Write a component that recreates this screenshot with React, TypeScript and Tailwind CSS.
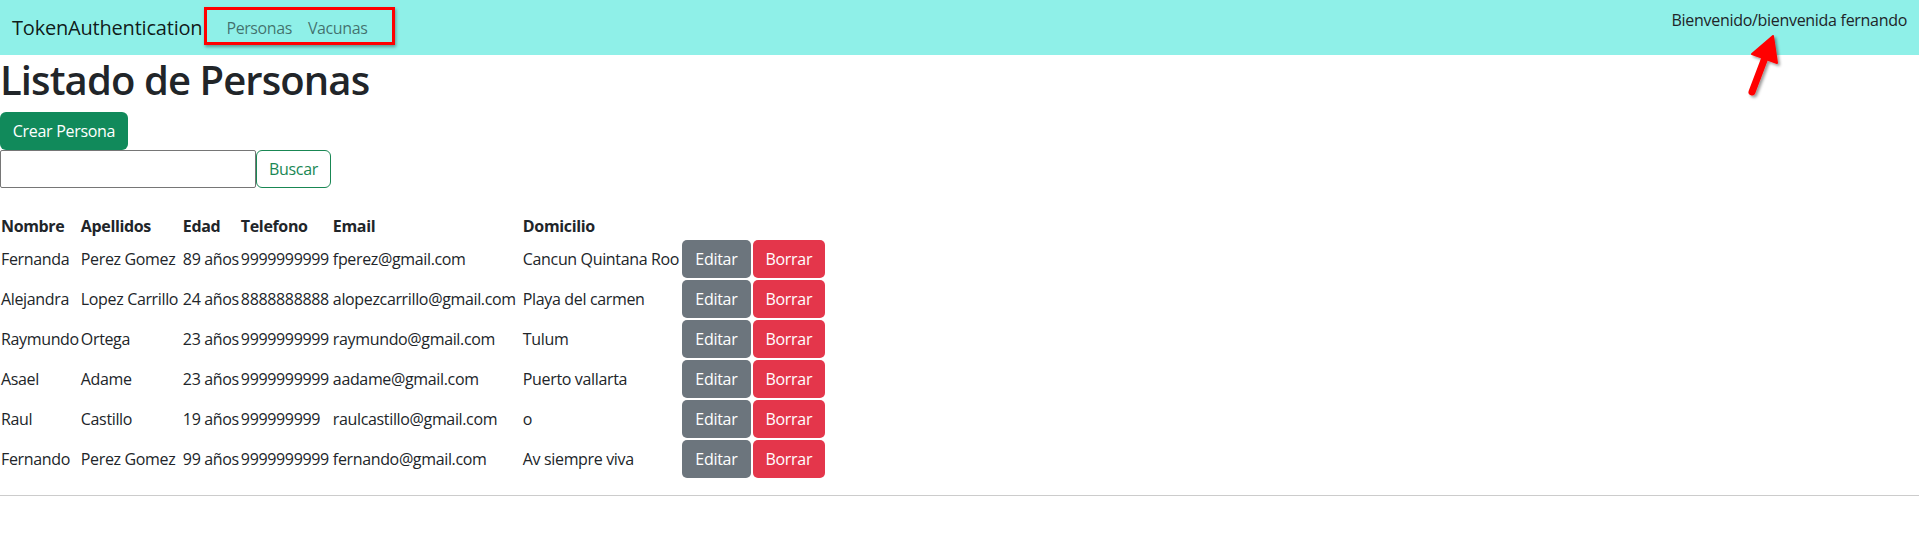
import React from "react";

const rows = [
  ["Fernanda", "Perez Gomez", "89 años", "9999999999", "fperez@gmail.com", "Cancun Quintana Roo"],
  ["Alejandra", "Lopez Carrillo", "24 años", "8888888888", "alopezcarrillo@gmail.com", "Playa del carmen"],
  ["Raymundo", "Ortega", "23 años", "9999999999", "raymundo@gmail.com", "Tulum"],
  ["Asael", "Adame", "23 años", "9999999999", "aadame@gmail.com", "Puerto vallarta"],
  ["Raul", "Castillo", "19 años", "999999999", "raulcastillo@gmail.com", "o"],
  ["Fernando", "Perez Gomez", "99 años", "9999999999", "fernando@gmail.com", "Av siempre viva"],
];

const widths = [79, 102, 58, 92, 190, 159, 71, 74];

export default function App() {
  return (
    <div className="relative w-[1919px] h-[549px] bg-white text-[#212529] font-['Open_Sans','Noto_Sans',sans-serif] text-[16px] overflow-hidden">
      <nav className="h-[55px] bg-[#8ff0e8] flex justify-between px-[12px]">
        <div className="flex items-center">
          <span className="text-[20px] tracking-[-0.2px] text-black/90 mr-[16px] pt-[1px]">TokenAuthentication</span>
          <a className="px-[8px] text-black/55 pt-[1px] tracking-[-0.4px]">Personas</a>
          <a className="px-[8px] text-black/55 pt-[1px] tracking-[-0.4px]">Vacunas</a>
        </div>
        <div className="pt-[8px] text-[16px] text-[#212529] tracking-[-0.3px]">Bienvenido/bienvenida fernando</div>
      </nav>

      <main className="pt-[1px]">
        <h1 className="text-[40px] font-semibold leading-[1.2] mb-[8px] tracking-[-0.9px]">Listado de Personas</h1>
        <button className="h-[38px] w-[128px] rounded-[6px] bg-[#118a5b] text-white text-[16px] tracking-[-0.3px]">
          Crear Persona
        </button>
        <div className="flex">
          <input className="h-[38px] w-[256px] border border-[#767676] rounded-[2px] bg-white outline-none px-2" />
          <button className="h-[38px] w-[75px] rounded-[6px] border border-[#198754] text-[#198754] bg-white text-[16px] tracking-[-0.3px]">
            Buscar
          </button>
        </div>

        <table className="mt-[25px] table-fixed border-collapse tracking-[-0.35px]">
          <colgroup>
            {widths.map((w, i) => (
              <col key={i} style={{ width: w }} />
            ))}
          </colgroup>
          <thead>
            <tr className="h-[26px]">
              {["Nombre", "Apellidos", "Edad", "Telefono", "Email", "Domicilio", "", ""].map((h, i) => (
                <th key={i} className="p-[1px] text-left font-bold whitespace-nowrap leading-[24px]">
                  {h}
                </th>
              ))}
            </tr>
          </thead>
          <tbody>
            {rows.map((r, i) => (
              <tr key={i} className="h-[40px]">
                {r.map((c, j) => (
                  <td key={j} className="p-[1px] align-middle whitespace-nowrap">
                    {c}
                  </td>
                ))}
                <td className="p-[1px] align-middle">
                  <button className="h-[38px] w-[69px] rounded-[5px] bg-[#6c757d] text-white tracking-[-0.3px]">Editar</button>
                </td>
                <td className="p-[1px] align-middle">
                  <button className="h-[38px] w-[72px] rounded-[5px] bg-[#e4364b] text-white tracking-[-0.3px]">Borrar</button>
                </td>
              </tr>
            ))}
          </tbody>
        </table>
        <hr className="mt-[16px] border-t border-[#cccccc]" />
      </main>

      {/* annotation: red box */}
      <div className="absolute left-[204px] top-[7px] w-[191px] h-[38px] border-[3px] border-[#ff0000] shadow-[1px_2px_3px_rgba(0,0,0,0.35)]" />

      {/* annotation: red arrow */}
      <svg className="absolute left-[1735px] top-[25px]" width="60" height="80" viewBox="1735 25 60 80">
        <defs>
          <filter id="sh" x="-50%" y="-50%" width="200%" height="200%">
            <feDropShadow dx="2" dy="2" stdDeviation="1.5" floodColor="#000" floodOpacity="0.4" />
          </filter>
        </defs>
        <g filter="url(#sh)">
          <line x1="1752" y1="92" x2="1766" y2="55" stroke="#ff0000" strokeWidth="7" strokeLinecap="round" />
          <polygon points="1773,36 1752,54 1777,63" fill="#ff0000" stroke="#ff0000" strokeWidth="2" strokeLinejoin="round" />
        </g>
      </svg>
    </div>
  );
}
